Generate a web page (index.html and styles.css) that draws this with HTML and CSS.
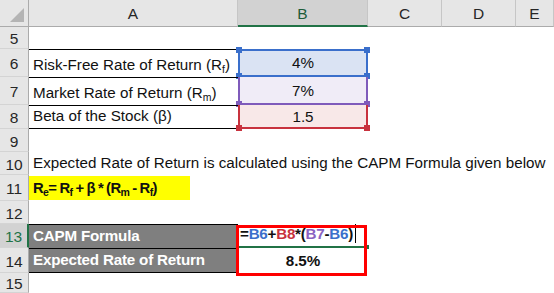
FILE: index.html
```html
<!DOCTYPE html>
<html lang="en">
<head>
    <meta charset="UTF-8">
    <meta name="viewport" content="width=device-width, initial-scale=1.0">
    <title>CAPM Formula - Expected Rate of Return</title>
    <link rel="stylesheet" href="styles.css">
</head>
<body>
    <div class="sheet">
        <!-- column headers -->
        <div class="hdr corner"><span class="corner-mark"></span></div>
        <div class="hdr col">A</div>
        <div class="hdr col active-col">B</div>
        <div class="hdr col">C</div>
        <div class="hdr col">D</div>
        <div class="hdr col">E</div>

        <!-- row 5 -->
        <div class="hdr row">5</div>
        <div class="cell"></div>
        <div class="cell"></div>
        <div class="cell"></div>
        <div class="cell"></div>
        <div class="cell"></div>

        <!-- row 6 -->
        <div class="hdr row">6</div>
        <div class="cell lined"><span>Risk-Free Rate of Return (R<sub>f</sub>)</span></div>
        <div class="cell num ref-blue"><span>4%</span>
            <span class="handle tl blue"></span><span class="handle tr blue"></span>
            <span class="handle bl blue"></span><span class="handle br blue"></span>
        </div>
        <div class="cell"></div>
        <div class="cell"></div>
        <div class="cell"></div>

        <!-- row 7 -->
        <div class="hdr row">7</div>
        <div class="cell lined"><span>Market Rate of Return (R<sub>m</sub>)</span></div>
        <div class="cell num ref-purple"><span>7%</span>
            <span class="handle bl purple"></span><span class="handle br purple"></span>
        </div>
        <div class="cell"></div>
        <div class="cell"></div>
        <div class="cell"></div>

        <!-- row 8 -->
        <div class="hdr row">8</div>
        <div class="cell lined last"><span>Beta of the Stock (β)</span></div>
        <div class="cell num ref-red"><span>1.5</span>
            <span class="handle bl red"></span><span class="handle br red"></span>
        </div>
        <div class="cell"></div>
        <div class="cell"></div>
        <div class="cell"></div>

        <!-- row 9 -->
        <div class="hdr row">9</div>
        <div class="cell"></div>
        <div class="cell"></div>
        <div class="cell"></div>
        <div class="cell"></div>
        <div class="cell"></div>

        <!-- row 10 -->
        <div class="hdr row">10</div>
        <div class="cell overflow"><span>Expected Rate of Return is calculated using the CAPM Formula given below</span></div>
        <div class="cell"></div>
        <div class="cell"></div>
        <div class="cell"></div>
        <div class="cell"></div>

        <!-- row 11 -->
        <div class="hdr row">11</div>
        <div class="cell highlight-cell">
            <div class="highlight"><span>R<sub>e</sub>= R<sub>f</sub> + β * (R<sub>m</sub> - R<sub>f</sub>)</span></div>
        </div>
        <div class="cell"></div>
        <div class="cell"></div>
        <div class="cell"></div>
        <div class="cell"></div>

        <!-- row 12 -->
        <div class="hdr row">12</div>
        <div class="cell"></div>
        <div class="cell"></div>
        <div class="cell"></div>
        <div class="cell"></div>
        <div class="cell"></div>

        <!-- row 13 -->
        <div class="hdr row active-row">13</div>
        <div class="cell dark"><span>CAPM Formula</span></div>
        <div class="cell editing">
            <span class="formula">=<span class="f-blue">B6</span>+<span class="f-red">B8</span>*(<span class="f-purple">B7</span>-<span class="f-blue">B6</span>)</span><span class="caret"></span>
            <span class="result-box"></span>
        </div>
        <div class="cell"></div>
        <div class="cell"></div>
        <div class="cell"></div>

        <!-- row 14 -->
        <div class="hdr row">14</div>
        <div class="cell dark last"><span>Expected Rate of Return</span></div>
        <div class="cell num bold"><span>8.5%</span></div>
        <div class="cell"></div>
        <div class="cell"></div>
        <div class="cell"></div>

        <!-- row 15 -->
        <div class="hdr row">15</div>
        <div class="cell"></div>
        <div class="cell"></div>
        <div class="cell"></div>
        <div class="cell"></div>
        <div class="cell"></div>
    </div>
</body>
</html>
```

FILE: styles.css
```css
/* Spreadsheet view */
body {
    font-family: "Liberation Sans", Arial, sans-serif;
    margin: 0;
    padding: 0;
    background-color: #ffffff;
    overflow: hidden;
}

.sheet {
    display: grid;
    grid-template-columns: 29px 209px 130px 74px 74px 38px;
    grid-template-rows: 27px 22px 28px 28px 24px 23px 23px 26px 23px 24px 25px 20px;
    font-size: 15.2px;
    color: #111;
}

/* headers */
.hdr {
    box-sizing: border-box;
    background-color: #e6e6e6;
    color: #262626;
    display: flex;
    align-items: center;
    justify-content: center;
    font-size: 15.5px;
}

.hdr.col {
    border-right: 1px solid #c6c6c6;
    border-bottom: 1px solid #ababab;
    padding-top: 2px;
}

.hdr.corner {
    border-right: 1px solid #ababab;
    border-bottom: 1px solid #ababab;
    position: relative;
}

.corner-mark {
    position: absolute;
    right: 4px;
    bottom: 4px;
    width: 0;
    height: 0;
    border-left: 14px solid transparent;
    border-bottom: 14px solid #b4b4b4;
}

.hdr.row {
    border-right: 1px solid #ababab;
    border-bottom: 1px solid #d4d4d4;
    padding-top: 3px;
}

.hdr.active-col {
    background-color: #d2d2d2;
    border-bottom: 2px solid #217346;
    color: #1d5d3a;
}

.hdr.active-row {
    background-color: #d2d2d2;
    border-right: 2px solid #217346;
    color: #217346;
}

/* cells */
.cell {
    box-sizing: border-box;
    position: relative;
    display: flex;
    align-items: flex-end;
    padding: 0 0 3px 4px;
    line-height: 18px;
    white-space: nowrap;
}

.cell sub {
    font-size: 10.5px;
    line-height: 0;
    vertical-align: -3px;
}

.cell.overflow {
    overflow: visible;
    z-index: 1;
}

.lined {
    border-top: 1px solid #000;
}

.lined.last,
.dark.last {
    border-bottom: 1px solid #000;
}

.num {
    justify-content: center;
    padding-left: 0;
}

.bold {
    font-weight: bold;
}

/* referenced cells */
.ref-blue {
    background-color: #dae3f3;
    border: 2px solid #3a6fcb;
}

.ref-purple {
    background-color: #f0ecf7;
    border: 2px solid #7f5bbb;
    border-top: none;
}

.ref-red {
    background-color: #f8e8e8;
    border: 2px solid #c8323e;
    border-top: none;
    padding-bottom: 1px;
}

.handle {
    position: absolute;
    width: 6px;
    height: 6px;
}

.handle.blue { background-color: #3a6fcb; }
.handle.purple { background-color: #7f5bbb; }
.handle.red { background-color: #c8323e; }

.handle.tl { left: -4px; top: -4px; }
.handle.tr { right: -4px; top: -4px; }
.handle.bl { left: -4px; bottom: -4px; }
.handle.br { right: -4px; bottom: -4px; }

/* formula line */
.highlight-cell {
    align-items: stretch;
    padding: 1px 0 1px 0;
}

.highlight {
    display: flex;
    align-items: flex-end;
    width: 161px;
    padding: 0 0 3px 4px;
    box-sizing: border-box;
    background-color: #ffff00;
    font-weight: bold;
    font-size: 14.8px;
    letter-spacing: -0.6px;
    word-spacing: -0.5px;
}

/* summary block */
.dark {
    background-color: #7f7f7f;
    color: #ffffff;
    font-weight: bold;
    letter-spacing: -0.2px;
    border-top: 1px solid #000;
}

.editing {
    font-weight: bold;
    letter-spacing: -0.25px;
    padding-left: 2px;
    border-bottom: 2px solid #217346;
}

.editing::after {
    content: "";
    position: absolute;
    right: -1px;
    bottom: -3px;
    width: 4px;
    height: 4px;
    background-color: #217346;
}

.f-blue { color: #3a6fcb; }
.f-red { color: #c8323e; }
.f-purple { color: #8a63c2; }

.caret {
    display: inline-block;
    width: 1px;
    height: 19px;
    margin-left: 2px;
    background-color: #000;
}

.result-box {
    position: absolute;
    left: -2px;
    top: 1px;
    width: 131px;
    height: 51px;
    box-sizing: border-box;
    border: 3px solid #ff0000;
    z-index: 2;
}
```
